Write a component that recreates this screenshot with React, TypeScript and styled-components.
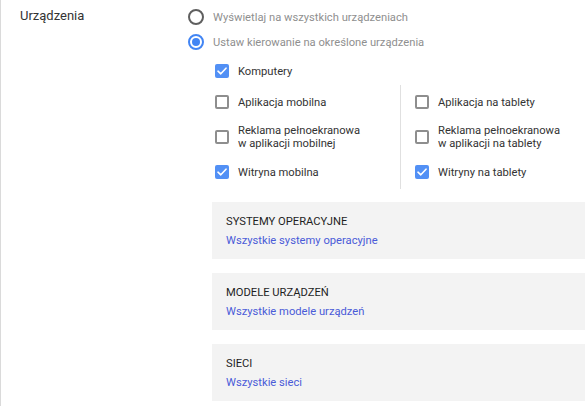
import React from "react";
import styled, { createGlobalStyle } from "styled-components";

const GlobalStyle = createGlobalStyle`
  body {
    margin: 0;
    font-family: Roboto, "Liberation Sans", Arial, sans-serif;
    background: #fff;
  }
`;

type Option = { label: string[]; checked: boolean };

const leftOptions: Option[] = [
  { label: ["Aplikacja mobilna"], checked: false },
  { label: ["Reklama pełnoekranowa", "w aplikacji mobilnej"], checked: false },
  { label: ["Witryna mobilna"], checked: true },
];

const rightOptions: Option[] = [
  { label: ["Aplikacja na tablety"], checked: false },
  { label: ["Reklama pełnoekranowa", "w aplikacji na tablety"], checked: false },
  { label: ["Witryny na tablety"], checked: true },
];

const rowHeights = [34, 36, 34];

const panels = [
  { title: "SYSTEMY OPERACYJNE", link: "Wszystkie systemy operacyjne" },
  { title: "MODELE URZĄDZEŃ", link: "Wszystkie modele urządzeń" },
  { title: "SIECI", link: "Wszystkie sieci" },
];

function CheckMark() {
  return (
    <svg width="10" height="8" viewBox="0 0 10 8">
      <path
        d="M1 4.2 L3.8 6.8 L9 1.2"
        fill="none"
        stroke="#fff"
        strokeWidth="1.6"
        strokeLinecap="round"
        strokeLinejoin="round"
      />
    </svg>
  );
}

function CheckItem({ option, height }: { option: Option; height: number }) {
  return (
    <CheckRow $height={height}>
      <Box $checked={option.checked}>{option.checked && <CheckMark />}</Box>
      <CheckLabel>
        {option.label.map((line) => (
          <div key={line}>{line}</div>
        ))}
      </CheckLabel>
    </CheckRow>
  );
}

export default function App() {
  return (
    <>
      <GlobalStyle />
      <Page>
        <SectionLabel>Urządzenia</SectionLabel>
        <Options>
          <RadioRow>
            <Radio $checked={false} />
            <RadioLabel>Wyświetlaj na wszystkich urządzeniach</RadioLabel>
          </RadioRow>
          <RadioRow>
            <Radio $checked />
            <RadioLabel>Ustaw kierowanie na określone urządzenia</RadioLabel>
          </RadioRow>

          <CheckList>
            <CheckItem option={{ label: ["Komputery"], checked: true }} height={28} />
            <DeviceGrid>
              <Column $divider>
                {leftOptions.map((o, i) => (
                  <CheckItem key={o.label[0] + i} option={o} height={rowHeights[i]} />
                ))}
              </Column>
              <Column>
                {rightOptions.map((o, i) => (
                  <CheckItem key={o.label[0] + i} option={o} height={rowHeights[i]} />
                ))}
              </Column>
            </DeviceGrid>
          </CheckList>

          <Panels>
            {panels.map((p) => (
              <Panel key={p.title}>
                <PanelTitle>{p.title}</PanelTitle>
                <PanelLink href="#">{p.link}</PanelLink>
              </Panel>
            ))}
          </Panels>
        </Options>
      </Page>
    </>
  );
}

const Page = styled.div`
  display: grid;
  grid-template-columns: 168px 1fr;
  min-height: 406px;
  box-sizing: border-box;
  border-left: 1px solid #dadada;
  padding-left: 19px;
  padding-right: 2px;
`;

const SectionLabel = styled.div`
  font-size: 13px;
  line-height: 16px;
  color: #333;
  padding-top: 8px;
`;

const Options = styled.div`
  display: flex;
  flex-direction: column;
  padding-top: 9px;
`;

const RadioRow = styled.div`
  display: flex;
  align-items: center;
  height: 16px;
  gap: 9px;
  margin-bottom: 9px;
`;

const Radio = styled.span<{ $checked: boolean }>`
  box-sizing: border-box;
  width: 16px;
  height: 16px;
  border-radius: 50%;
  border: 2px solid ${({ $checked }) => ($checked ? "#4285f4" : "#5f5f5f")};
  display: flex;
  align-items: center;
  justify-content: center;

  &::after {
    content: "";
    width: 8px;
    height: 8px;
    border-radius: 50%;
    background: #4285f4;
    display: ${({ $checked }) => ($checked ? "block" : "none")};
  }
`;

const RadioLabel = styled.span`
  font-size: 11.2px;
  color: #8f8f8f;
`;

const CheckList = styled.div`
  display: flex;
  flex-direction: column;
  margin-left: 27px;
  margin-top: -2px;
`;

const DeviceGrid = styled.div`
  display: grid;
  grid-template-columns: 186px 1fr;
`;

const Column = styled.div<{ $divider?: boolean }>`
  display: flex;
  flex-direction: column;
  border-right: ${({ $divider }) => ($divider ? "1px solid #e0e0e0" : "none")};
  padding-left: ${({ $divider }) => ($divider ? "0" : "14px")};
`;

const CheckRow = styled.div<{ $height: number }>`
  display: flex;
  align-items: center;
  gap: 9px;
  height: ${({ $height }) => $height}px;
`;

const Box = styled.span<{ $checked: boolean }>`
  box-sizing: border-box;
  flex: none;
  width: 14px;
  height: 14px;
  border-radius: 2px;
  border: ${({ $checked }) => ($checked ? "none" : "2px solid #8e8e8e")};
  background: ${({ $checked }) => ($checked ? "#5290f5" : "#fff")};
  display: flex;
  align-items: center;
  justify-content: center;
`;

const CheckLabel = styled.div`
  font-size: 11.2px;
  line-height: 13px;
  color: #333;
`;

const Panels = styled.div`
  display: flex;
  flex-direction: column;
  gap: 14px;
  margin-top: 13px;
  margin-left: 24px;
`;

const Panel = styled.div`
  background: #f3f3f3;
  height: 57px;
  box-sizing: border-box;
  padding: 12px 14px 10px;
  display: flex;
  flex-direction: column;
  gap: 3px;
`;

const PanelTitle = styled.div`
  font-size: 11.2px;
  line-height: 16px;
  font-weight: 400;
  color: #1f1f1f;
`;

const PanelLink = styled.a`
  font-size: 11.2px;
  line-height: 16px;
  color: #4a5bd8;
  text-decoration: none;
`;
